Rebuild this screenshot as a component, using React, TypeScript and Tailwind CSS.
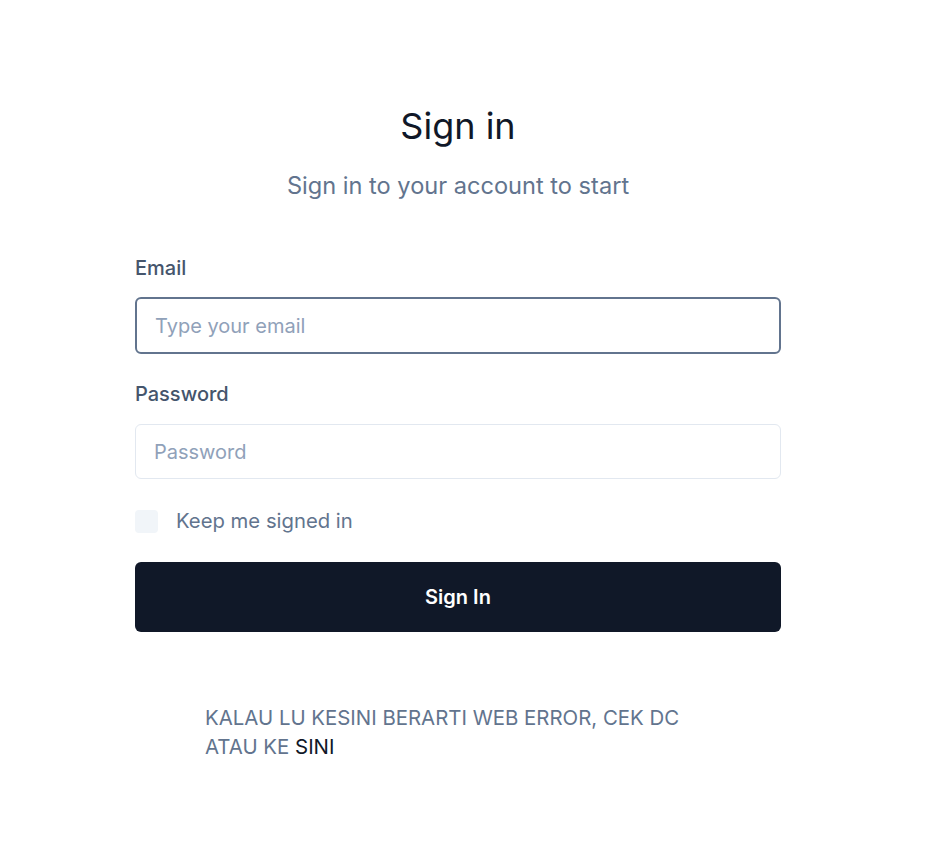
export default function App() {
  return (
    <div className="min-h-screen bg-white font-['Inter','Liberation_Sans',sans-serif]">
      <div className="ml-[135px] w-[646px] pt-[100px]">
        <h1 className="text-center text-[36px] leading-[52px] text-gray-900">Sign in</h1>
        <p className="mt-[20px] text-center text-[23.6px] leading-[28px] text-slate-500">Sign in to your account to start</p>

        <form className="mt-[54px]" onSubmit={(e) => e.preventDefault()}>
          <label className="block text-[20px] leading-[28px] font-medium text-slate-600">Email</label>
          <input
            autoFocus
            placeholder="Type your email"
            className="mt-[15px] block h-[57px] w-full rounded-md border-2 border-slate-500 px-[18px] text-[20px] text-gray-900 outline-none placeholder:text-slate-400"
          />

          <label className="mt-[26px] block text-[20px] leading-[28px] font-medium text-slate-600">Password</label>
          <input
            type="password"
            placeholder="Password"
            className="mt-[16px] block h-[55px] w-full rounded-md border border-slate-200 px-[18px] text-[20px] text-gray-900 outline-none placeholder:text-slate-400"
          />

          <label className="mt-[28px] flex items-center gap-[18px]">
            <span className="h-[23px] w-[23px] rounded bg-slate-100" />
            <span className="text-[20.3px] leading-[28px] text-slate-500">Keep me signed in</span>
          </label>

          <button className="mt-[27px] h-[70px] w-full rounded-md bg-gray-900 text-[20px] font-semibold text-white">
            Sign In
          </button>
        </form>

        <p className="mt-[71px] ml-[70px] text-[20.4px] leading-[29px] text-slate-500">
          KALAU LU KESINI BERARTI WEB ERROR, CEK DC
          <br />
          ATAU KE <a className="text-gray-900">SINI</a>
        </p>
      </div>
    </div>
  );
}
